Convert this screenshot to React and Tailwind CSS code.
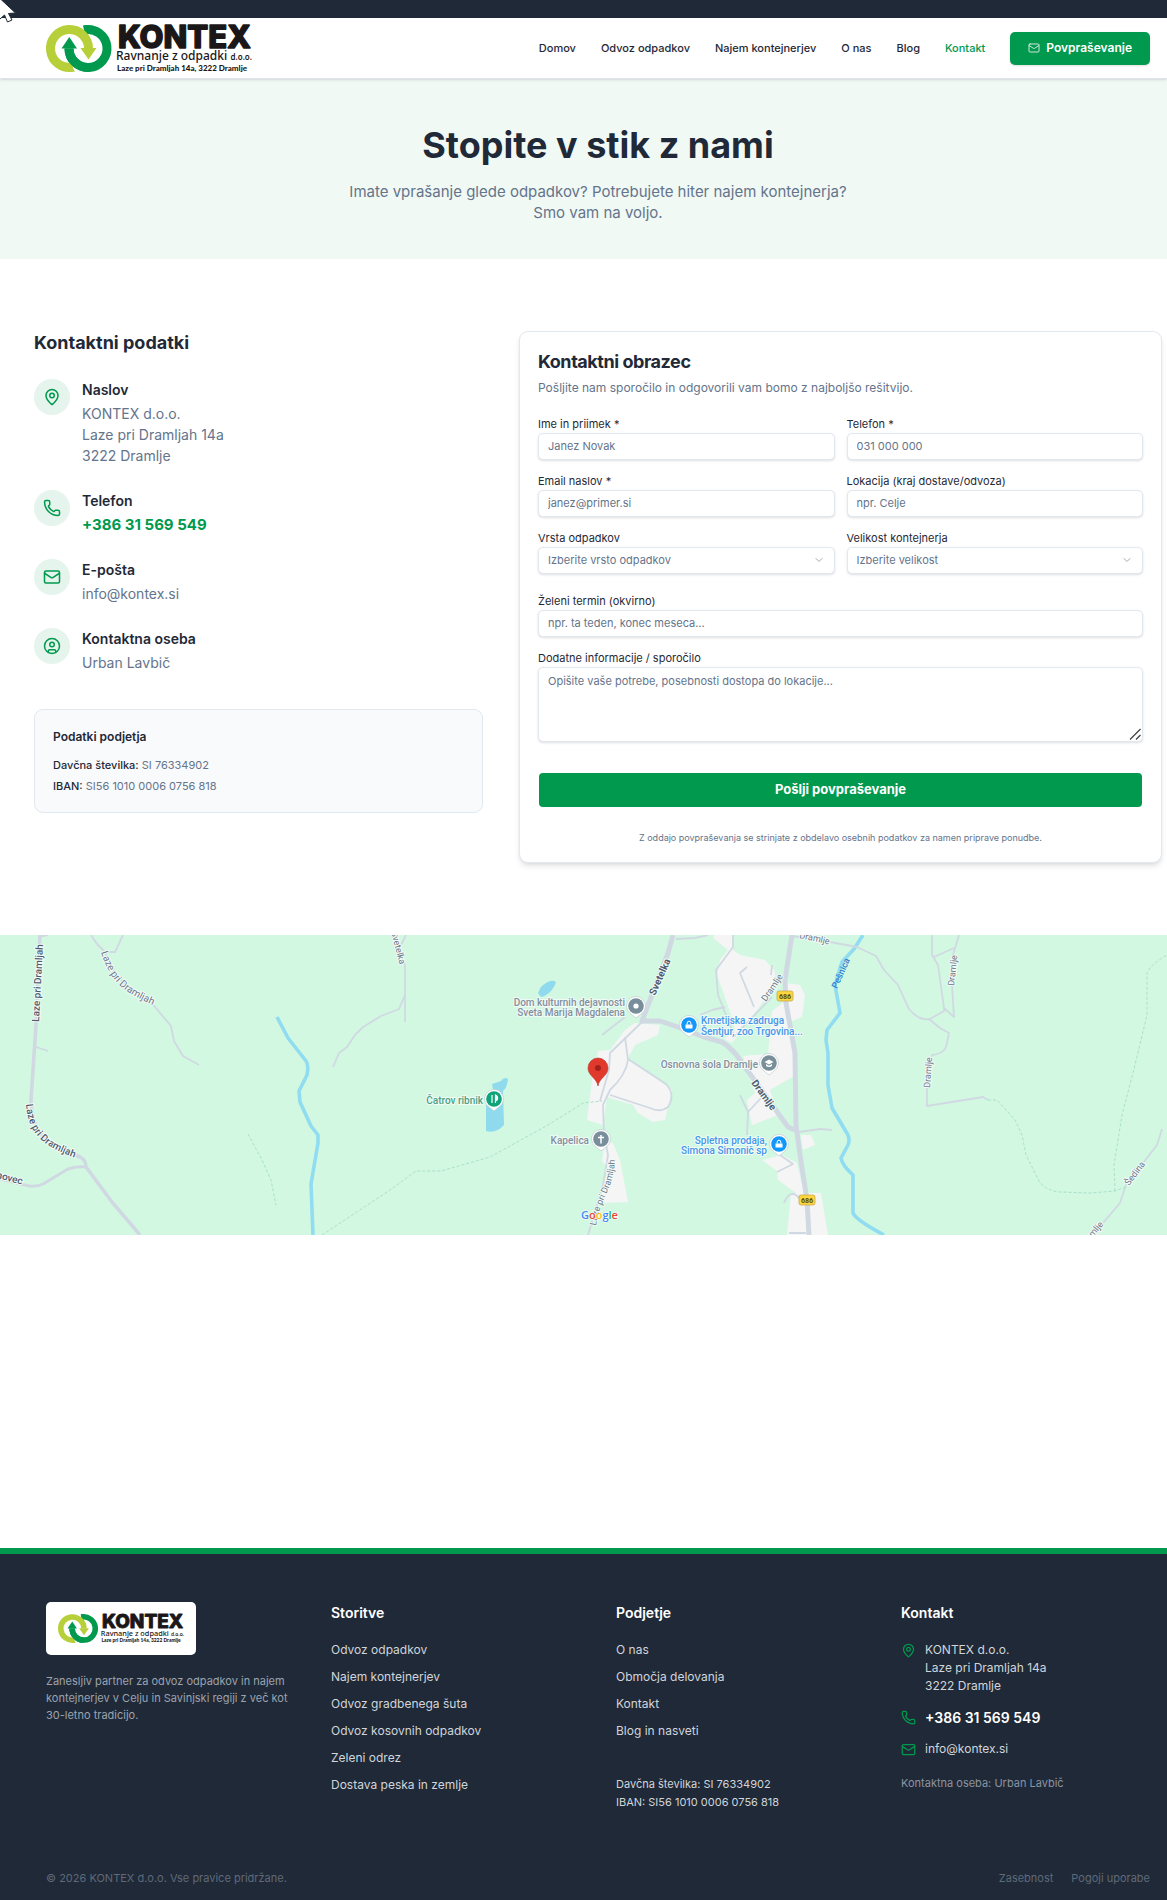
import React from 'react';
import { ChevronDown, CircleUser, Mail, MapPin, Phone } from 'lucide-react';

const navLinks = ['Domov', 'Odvoz odpadkov', 'Najem kontejnerjev', 'O nas', 'Blog', 'Kontakt'];

const serviceLinks = [
    'Odvoz odpadkov',
    'Najem kontejnerjev',
    'Odvoz gradbenega šuta',
    'Odvoz kosovnih odpadkov',
    'Zeleni odrez',
    'Dostava peska in zemlje',
];

const companyLinks = ['O nas', 'Območja delovanja', 'Kontakt', 'Blog in nasveti'];

const Logo = ({ className }) => (
    <svg viewBox="0 0 206 47" className={`overflow-visible ${className}`} role="img" aria-label="KONTEX">
        <path d="M38.5 4.8 A19 19 0 1 1 23 23.5" fill="none" stroke="#00994d" strokeWidth="9" />
        <path d="M37 0.4 L42 0 L42 9 L39 9.5 Z" fill="#00994d" />
        <path d="M27 42.2 A19 19 0 1 1 42.5 23.5" fill="none" stroke="#b7cf38" strokeWidth="9" />
        <path d="M23 38 L29 46.4 L23 47 Z" fill="#b7cf38" />
        <path d="M34.5 23 L50.5 23 L42.5 34.5 Z" fill="#b7cf38" />
        <path d="M23 23.5 A19 19 0 0 0 42 42.5" fill="none" stroke="#00994d" strokeWidth="9" />
        <path d="M15.5 23.5 L31 23.5 L23.3 12 Z" fill="#00994d" />
        <g fill="#1b1718">
            <text x="72" y="23" fontFamily="Inter, sans-serif" fontSize="31" fontWeight="800" stroke="#1b1718" strokeWidth="1.4" strokeLinejoin="round">KONTEX</text>
            <text x="70" y="35" fontFamily="'Noto Sans', sans-serif" fontSize="12" fontWeight="500">Ravnanje z odpadki</text>
            <text x="206" y="35" fontFamily="'Noto Sans', sans-serif" fontSize="8" fontWeight="600" textAnchor="end">d.o.o.</text>
            <text x="71" y="46" fontFamily="Lato, sans-serif" fontSize="8" fontWeight="900">Laze pri Dramljah 14a, 3222 Dramlje</text>
        </g>
    </svg>
);

const Cursor = () => (
    <svg viewBox="0 0 18 24" className="absolute left-0 top-0 z-20 h-6 w-[18px]" aria-hidden="true">
        <path d="M-8 -9 L15.5 13 L8.5 13.5 L12 20 L7.5 22 L4.5 15 L-8 26 Z" fill="#fff" stroke="#1f2937" strokeWidth="1" />
    </svg>
);

const ContactItem = ({ icon: Icon, title, children }) => (
    <div className="flex gap-3">
        <div className="flex size-9 shrink-0 items-center justify-center rounded-full bg-[#e5f4ec]">
            <Icon size={18} className="text-[#00994d]" />
        </div>
        <div className="text-[14px] leading-[21px]">
            <h3 className="mb-[3px] font-semibold text-[#1f2937]">{title}</h3>
            <div className="text-[#64748b]">{children}</div>
        </div>
    </div>
);

const labelClass = 'block text-[11px] leading-[18px]';
const fieldClass =
    'block w-full rounded-[5px] border border-[#e2e8f0] bg-white px-[9px] text-[11px] text-[#1f2937] shadow-sm placeholder:text-[#64748b]';

const Field = ({ id, label, placeholder, type = 'text' }) => (
    <div>
        <label htmlFor={id} className={labelClass}>{label}</label>
        <input id={id} type={type} placeholder={placeholder} className={`${fieldClass} h-[27px] pb-[2px]`} />
    </div>
);

const SelectField = ({ id, label, placeholder }) => (
    <div>
        <label htmlFor={id} className={labelClass}>{label}</label>
        <div className="relative">
            <select id={id} className={`${fieldClass} h-[27px] appearance-none text-[#64748b]`}>
                <option>{placeholder}</option>
            </select>
            <ChevronDown size={12} className="pointer-events-none absolute right-[10px] top-[7px] text-[#a3abb5]" />
        </div>
    </div>
);

const Pin = ({ x, y, color, children }) => (
    <g transform={`translate(${x} ${y})`}>
        <path d="M0 12 L-5 8 A9.5 9.5 0 1 1 5 8 Z" fill="#fff" stroke="#b8c4c8" strokeWidth="0.6" />
        <circle r="7.8" fill={color} />
        {children}
    </g>
);

const Bag = () => (
    <>
        <path d="M-3.5 -0.5 H3.5 V3.5 H-3.5 Z" fill="#fff" />
        <path d="M-1.8 -0.5 V-2 A1.8 1.8 0 0 1 1.8 -2 V-0.5" fill="none" stroke="#fff" strokeWidth="1" />
    </>
);

const RoadSign = ({ x, y }) => (
    <g transform={`translate(${x} ${y})`}>
        <rect x="-8" y="-5" width="16" height="10" rx="2" fill="#fdd53f" stroke="#c9a94a" strokeWidth="0.8" />
        <text y="3" fontSize="7" fontWeight="700" textAnchor="middle" fill="#5a4a10">686</text>
    </g>
);

const Map = () => (
    <svg viewBox="0 0 1167 300" preserveAspectRatio="xMidYMid slice" className="block h-[300px] w-full bg-[#d2f8e2]" role="img" aria-label="Zemljevid">
        <defs>
            <path id="lazeCurve" d="M26 169 C29 203 46 213 84 226" />
            <path id="lazeTop" d="M101 17 C111 48 122 57 162 74" />
            <path id="lazeBottom" d="M596 291 C600 262 615 255 615 218" />
        </defs>

        {/* built-up areas */}
        <g fill="#f5f5f5">
            <path d="M715 0 H733 V15 L740 20 L765 25 L775 36 V50 L757 75 L738 100 L732 108 L724 104 L735 95 L733 85 L717 40 L720 25 L728 15 L713 3 Z" />
            <path d="M786 48 L800 50 L805 60 L802 82 L790 87 L796 110 V140 L770 155 L778 180 L752 190 L747 165 L755 158 L743 121 L768 119 L772 76 L786 65 Z" />
            <path d="M635 88 L660 90 L658 100 L635 110 L628 123 L672 155 L665 185 L653 187 L638 178 L633 170 L607 162 L603 190 L587 185 L592 145 L598 116 L610 115 L625 95 Z" />
            <path d="M605 208 L613 208 L620 225 L628 267 L605 268 L600 255 L609 235 L602 226 Z" />
            <path d="M762 225 L782 220 L797 228 L804 258 H796 L778 245 L777 236 Z" />
            <path d="M801 200 H811 L815 210 L803 215 Z" />
            <path d="M791 258 H821 L828 300 H787 Z" />
        </g>

        {/* water */}
        <g fill="#90daee">
            <path d="M538 58 Q541 49 550 46 Q558 45 555 50 Q550 60 541 62 Z" />
            <path d="M492 149 L501 146 Q504 141 508 144 Q507 153 503 156 L504 190 Q496 199 486 196 L486 170 L494 160 Z" />
        </g>
        <g fill="none" stroke="#90dcf0" strokeWidth="3.6" strokeLinejoin="round">
            <path d="M277 82 L288 103 L306 126 Q309 130 307 140 L299 156 L300 167 L311 191 L318 200 L318 208 L311 249 L313 300" />
            <path d="M863 0 L854 14 L842 27 L835 50 L840 78 L827 95 L826 105 L828 118 L828 150 L832 173 L848 200 Q850 206 848 210 L841 223 Q842 230 853 240 L853 278 Q856 285 884 300" />
        </g>

        {/* roads */}
        <g fill="none" stroke="#d0d9e2" strokeLinejoin="round">
            <g strokeWidth="4">
                <path d="M40 0 L36 90 L31 165 Q31 200 60 214 L80 222 Q86 225 86 232 L112 267 L140 300" strokeWidth="3.6" />
                <path d="M0 244 L25 250 Q35 253 43 249 L68 234 Q77 231 86 232" strokeWidth="3" />
                <path d="M673 0 L668 18 L642 86 L660 86 L675 91 L704 102 L722 107 Q732 113 740 125 L788 192 L797 196" strokeWidth="5" />
                <path d="M792 0 L785 45 L786 68 L795 118 L796 190 L800 220 L807 265 L809 300" strokeWidth="5" />
            </g>
            <g strokeWidth="1.8">
                <path d="M38 2 L48 0 M36 112 L48 116" />
                <path d="M91 0 L97 9 L105 17 L115 17 L123 0 M105 17 Q116 50 150 66 L171 91 L174 106 L183 121 L199 130" />
                <path d="M333 132 L339 118 L347 112 L355 100 L363 92 L381 81 L399 74 L405 60 L405 30 L394 0 M405 87 V60 M400 12 L406 0" />
                <path d="M676 4 L695 3 L708 0 M733 0 V12 L716 35 L718 60 L734 100 M700 80 L712 75 L725 72 M772 62 L740 95 L733 103" />
                <path d="M747 32 L740 38 L754 72 M772 30 L771 40 M740 160 L748 177 L747 200 M748 177 L762 162" />
                <path d="M642 87 L610 118 L609 135 L600 166 M602 100 L625 82 M625 102 L628 125 Q626 140 610 155 L603 170 L604 200 L608 220 L603 250 L588 300" />
                <path d="M628 124 L666 149 Q676 160 668 172 Q660 178 650 173 L610 160" />
                <path d="M777 237 L793 229 L780 220 M784 268 Q789 256 796 260 L806 270 M789 298 H806 M799 197 L820 194 L832 195" />
                <path d="M792 1 L830 7 L857 12 L876 21 L884 35 L898 50 L909 74 Q919 86 930 84 L944 76 V73 L938 30 L932 20 V0 M934 22 L954 13" />
                <path d="M959 0 L953 20 L952 50 L954 82 L944 73 M929 84 L940 93 L949 98 L946 112 Q943 119 932 120 L927 150 V171 L983 162 L988 165" />
                <path d="M1162 194 L1157 210 L1126 250 L1120 268 L1103 288 L1092 300" />
            </g>
        </g>
        <g fill="none" stroke="#aadfcb" strokeWidth="1" strokeDasharray="3 2">
            <path d="M248 199 L262 225 L271 245 L276 270" />
            <path d="M322 300 L390 255 L416 236 L441 236 L490 222 L548 190 L583 168 L602 166" />
            <path d="M988 165 L997 165 L1015 185 L1022 200 L1026 220 L1040 248 Q1048 256 1060 257 L1090 258 L1115 256 L1126 252" />
            <path d="M1115 256 L1114 230 L1122 180 L1135 130 L1147 80 L1147 38 Q1150 30 1167 20" />
        </g>

        {/* labels */}
        <g fontFamily="Roboto, sans-serif" fontSize="10" fill="#6b7789" stroke="#f3fbf7" strokeWidth="2" strokeLinejoin="round" paintOrder="stroke">
            <g fontWeight="500" fill="#4d5b70">
                <text transform="translate(39 87) rotate(-87)">Laze pri Dramljah</text>
                <text><textPath href="#lazeCurve">Laze pri Dramljah</textPath></text>
                <text transform="translate(-4 243) rotate(14)">novec</text>
                <text transform="translate(655 61) rotate(-66)" fontWeight="700">Svetelka</text>
                <text transform="translate(751 148) rotate(54)" fontWeight="700">Dramlje</text>
            </g>
            <text><textPath href="#lazeTop">Laze pri Dramljah</textPath></text>
            <text fontSize="9"><textPath href="#lazeBottom">Laze pri Dramljah</textPath></text>
            <g fontSize="9">
                <text transform="translate(391 -3) rotate(75)">Svetelka</text>
                <text transform="translate(766 67) rotate(-56)">Dramlje</text>
                <text transform="translate(799 3) rotate(12)">Dramlje</text>
                <text transform="translate(954 51) rotate(-84)">Dramlje</text>
                <text transform="translate(930 153) rotate(-86)">Dramlje</text>
                <text transform="translate(1129 251) rotate(-53)">Šedina</text>
                <text transform="translate(1084 313) rotate(-50)">Dramlje</text>
                <text transform="translate(837 54) rotate(-66)" fill="#2f7fd0" fontWeight="500" strokeWidth="0">Pešnica</text>
            </g>
            <g fontWeight="500" fill="#82909e">
                <text x="625" y="71" textAnchor="end">Dom kulturnih dejavnosti</text>
                <text x="625" y="81" textAnchor="end">Sveta Marija Magdalena</text>
                <text x="758" y="133" textAnchor="end">Osnovna šola Dramlje</text>
                <text x="589" y="209" textAnchor="end">Kapelica</text>
                <text x="483" y="169" textAnchor="end" fill="#46a186">Čatrov ribnik</text>
                <g fill="#4796ea">
                    <text x="701" y="89">Kmetijska zadruga</text>
                    <text x="701" y="100">Šentjur, zoo Trgovina...</text>
                    <text x="767" y="209" textAnchor="end">Spletna prodaja,</text>
                    <text x="767" y="219" textAnchor="end">Simona Simonič sp</text>
                </g>
            </g>
        </g>

        <g fontFamily="Roboto, sans-serif">
            <RoadSign x={785} y={61} />
            <RoadSign x={807} y={265} />
        </g>

        <Pin x={636} y={71} color="#788f9b"><circle r="2.6" fill="#fff" /></Pin>
        <Pin x={689} y={90} color="#1397fb"><Bag /></Pin>
        <Pin x={779} y={209} color="#1397fb"><Bag /></Pin>
        <Pin x={769} y={128} color="#788f9b">
            <path d="M-4.5 -1 L0 -3.5 L4.5 -1 L0 1.5 Z M-3 1 V3 Q0 5 3 3 V1 L0 2.8 Z" fill="#fff" />
        </Pin>
        <Pin x={601} y={204} color="#788f9b">
            <path d="M0 -4 V4.5 M-3 -1.5 H3" stroke="#fff" strokeWidth="1.5" />
        </Pin>
        <Pin x={494} y={164} color="#0fa47a">
            <path d="M-2 -4 V4 M1.5 4 V-4 Q4 -3 3.5 0 Q3 2 1.5 1" fill="#fff" stroke="#fff" strokeWidth="1.2" />
        </Pin>

        {/* company marker */}
        <path d="M598 151 C597 143 588 141 588 133 A10 10 0 0 1 608 133 C608 141 599 143 598 151 Z" fill="#e2392d" stroke="#b8302a" strokeWidth="0.6" />
        <circle cx="598" cy="133" r="3" fill="#a3211b" />

        <text x="581" y="284" fontFamily="'Open Sans', sans-serif" fontSize="11" fontWeight="600" stroke="#fff" strokeWidth="1" paintOrder="stroke">
            <tspan fill="#4285f4">G</tspan>
            <tspan fill="#ea4335">o</tspan>
            <tspan fill="#fbbc05">o</tspan>
            <tspan fill="#4285f4">g</tspan>
            <tspan fill="#34a853">l</tspan>
            <tspan fill="#ea4335">e</tspan>
        </text>
    </svg>
);

const Header = () => (
    <header className="relative z-10 border-b border-[#dfe4e9] bg-white shadow-sm">
        <div className="flex h-[60px] items-center justify-between pl-[46px] pr-[17px]">
            <a href="#"><Logo className="h-[47px] w-[206px]" /></a>
            <nav className="flex items-center gap-[25px] text-[11px] font-medium">
                {navLinks.map(link => (
                    <a key={link} href="#" className={link === 'Kontakt' ? 'text-[#00994d]' : ''}>{link}</a>
                ))}
                <button className="flex h-[33px] items-center gap-[6px] rounded-[5px] bg-[#00994d] px-[18px] text-[12px] font-semibold text-white shadow-sm">
                    <Mail size={12} className="opacity-80" />
                    Povpraševanje
                </button>
            </nav>
        </div>
    </header>
);

const ContactForm = () => (
    <form className="col-span-7 rounded-[9px] border border-[#e2e8f0] bg-white p-[18px] shadow-md">
        <h2 className="text-[18px] font-bold leading-6 tracking-tight">Kontaktni obrazec</h2>
        <p className="mb-[18px] mt-[5px] text-[12px] leading-[18px] text-[#64748b]">
            Pošljite nam sporočilo in odgovorili vam bomo z najboljšo rešitvijo.
        </p>
        <div className="mb-[18px] grid grid-cols-2 gap-3">
            <Field id="name" label="Ime in priimek *" placeholder="Janez Novak" />
            <Field id="phone" label="Telefon *" placeholder="031 000 000" type="tel" />
            <Field id="email" label="Email naslov *" placeholder="janez@primer.si" type="email" />
            <Field id="location" label="Lokacija (kraj dostave/odvoza)" placeholder="npr. Celje" />
            <SelectField id="waste" label="Vrsta odpadkov" placeholder="Izberite vrsto odpadkov" />
            <SelectField id="size" label="Velikost kontejnerja" placeholder="Izberite velikost" />
        </div>
        <Field id="term" label="Želeni termin (okvirno)" placeholder="npr. ta teden, konec meseca..." />
        <div className="mt-3">
            <label htmlFor="message" className={labelClass}>Dodatne informacije / sporočilo</label>
            <div className="relative">
                <textarea
                    id="message"
                    placeholder="Opišite vaše potrebe, posebnosti dostopa do lokacije..."
                    className={`${fieldClass} h-[75px] resize-none py-[6px] leading-[15px]`}
                />
                <svg viewBox="0 0 12 12" className="pointer-events-none absolute bottom-[2px] right-[2px] size-3" aria-hidden="true">
                    <path d="M1 11.5 L11.5 1 M7 11.5 L11.5 7" stroke="#444" strokeWidth="1.3" />
                </svg>
            </div>
        </div>
        <button
            type="button"
            className="mt-[30px] block h-9 w-full rounded-[5px] border border-transparent bg-[#00994d] bg-clip-padding text-[13px] font-bold text-white"
        >
            Pošlji povpraševanje
        </button>
        <p className="mt-6 text-center text-[9px] leading-3 text-[#64748b]">
            Z oddajo povpraševanja se strinjate z obdelavo osebnih podatkov za namen priprave ponudbe.
        </p>
    </form>
);

const FooterLinks = ({ title, links, children }) => (
    <div>
        <h4 className="mb-[18px] text-[14px] font-semibold leading-[21px] text-white">{title}</h4>
        <ul className="space-y-[9px] text-[12px] leading-[18px]">
            {links.map(link => (
                <li key={link}><a href="#">{link}</a></li>
            ))}
        </ul>
        {children}
    </div>
);

const Footer = () => (
    <footer className="border-t-[6px] border-[#00994d] bg-[#1f2937] pl-[46px] pr-[17px] pt-12 text-[#d1d5db]">
        <div className="grid grid-cols-4 gap-9">
            <div>
                <div className="inline-block rounded-[5px] bg-white p-3">
                    <Logo className="h-[29px] w-[126px]" />
                </div>
                <p className="mt-3 text-[11px] leading-[17px] text-[#9ca3af]">
                    Zanesljiv partner za odvoz odpadkov in najem kontejnerjev v Celju in Savinjski regiji z več kot 30-letno tradicijo.
                </p>
            </div>
            <FooterLinks title="Storitve" links={serviceLinks} />
            <FooterLinks title="Podjetje" links={companyLinks}>
                <div className="mt-[35px] text-[11px] leading-[18px]">
                    <p>Davčna številka: SI 76334902</p>
                    <p>IBAN: SI56 1010 0006 0756 818</p>
                </div>
            </FooterLinks>
            <div>
                <h4 className="mb-[18px] text-[14px] font-semibold leading-[21px] text-white">Kontakt</h4>
                <ul className="space-y-3 text-[12px] leading-[18px]">
                    <li className="flex gap-[9px]">
                        <MapPin size={15} className="mt-[2px] text-[#00994d]" />
                        <span>KONTEX d.o.o.<br />Laze pri Dramljah 14a<br />3222 Dramlje</span>
                    </li>
                    <li className="flex items-center gap-[9px]">
                        <Phone size={15} className="text-[#00994d]" />
                        <a href="#" className="text-[14px] font-semibold leading-[21px] text-white">+386 31 569 549</a>
                    </li>
                    <li className="flex items-center gap-[9px]">
                        <Mail size={15} className="text-[#00994d]" />
                        <a href="#">info@kontex.si</a>
                    </li>
                </ul>
                <p className="mt-[18px] text-[11px] leading-[15px] text-[#8b94a2]">Kontaktna oseba: Urban Lavbič</p>
            </div>
        </div>
        <div className="mt-[60px] flex justify-between pb-[14px] text-[11px] leading-[15px] text-[#5f6979]">
            <p>© 2026 KONTEX d.o.o. Vse pravice pridržane.</p>
            <div className="flex gap-[18px]">
                <a href="#">Zasebnost</a>
                <a href="#">Pogoji uporabe</a>
            </div>
        </div>
    </footer>
);

export default function App() {
    return (
        <div className="relative bg-white font-['Inter',sans-serif] text-[#1f2937]">
            <div className="h-[18px] bg-[#1f2937]" />
            <Cursor />
            <Header />

            <section className="bg-[#f1f9f5] pb-9 pl-[29px] pt-12 text-center">
                <h1 className="text-[36px] font-bold leading-9">Stopite v stik z nami</h1>
                <p className="mx-auto mt-[18px] max-w-[504px] text-[15px] leading-[21px] text-[#64748b]">
                    Imate vprašanje glede odpadkov? Potrebujete hiter najem kontejnerja? Smo vam na voljo.
                </p>
            </section>

            <main className="grid grid-cols-12 gap-9 py-[72px] pl-[34px] pr-[5px]">
                <div className="col-span-5">
                    <h2 className="mb-6 text-[18px] font-bold leading-6">Kontaktni podatki</h2>
                    <div className="space-y-6">
                        <ContactItem icon={MapPin} title="Naslov">
                            KONTEX d.o.o.<br />Laze pri Dramljah 14a<br />3222 Dramlje
                        </ContactItem>
                        <ContactItem icon={Phone} title="Telefon">
                            <a href="#" className="text-[15px] font-bold text-[#00994d]">+386 31 569 549</a>
                        </ContactItem>
                        <ContactItem icon={Mail} title="E-pošta">
                            <a href="#">info@kontex.si</a>
                        </ContactItem>
                        <ContactItem icon={CircleUser} title="Kontaktna oseba">Urban Lavbič</ContactItem>
                    </div>
                    <div className="mt-9 rounded-[9px] border border-[#e2e8f0] bg-[#f9fafc] px-[18px] pb-[17px] pt-[18px] text-[11px] leading-[18px] text-[#64748b]">
                        <h3 className="mb-[10px] text-[12px] font-semibold text-[#1f2937]">Podatki podjetja</h3>
                        <p><span className="font-medium text-[#1f2937]">Davčna številka:</span> SI 76334902</p>
                        <p className="mt-[3px]"><span className="font-medium text-[#1f2937]">IBAN:</span> SI56 1010 0006 0756 818</p>
                    </div>
                </div>
                <ContactForm />
            </main>

            <Map />
            <div className="h-[313px]" />
            <Footer />
        </div>
    );
}
